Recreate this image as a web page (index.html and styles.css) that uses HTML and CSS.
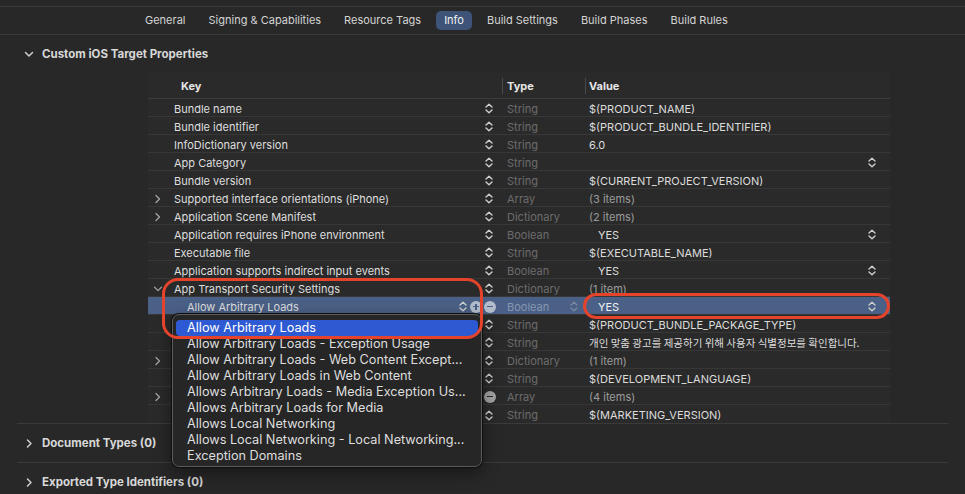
FILE: index.html
```html
<!DOCTYPE html>
<html>
<head>
<meta charset="utf-8">
<link rel="stylesheet" href="styles.css">
</head>
<body>
<div class="page">
  <nav class="tabbar">
    <span class="tab">General</span>
    <span class="tab">Signing &amp; Capabilities</span>
    <span class="tab">Resource Tags</span>
    <span class="tab active">Info</span>
    <span class="tab">Build Settings</span>
    <span class="tab">Build Phases</span>
    <span class="tab">Build Rules</span>
  </nav>

  <div class="section-head">
    <span class="chev"><svg width="10" height="7" viewBox="0 0 10 7"><path d="M1.5 1.5 L5 5 L8.5 1.5" fill="none" stroke="#cfcfcf" stroke-width="1.5" stroke-linecap="round" stroke-linejoin="round"/></svg></span>
    <span>Custom iOS Target Properties</span>
  </div>

  <div class="table">
    <div class="thead">
      <span></span>
      <span class="h-key">Key</span>
      <span></span>
      <span class="h-col">Type</span>
      <span class="h-col">Value</span>
    </div>

    <div class="row"><span class="disc"></span><span class="key">Bundle name</span><span class="ctrl"><i class="stp"></i></span><span class="type">String</span><span class="val">$(PRODUCT_NAME)</span></div>
    <div class="row"><span class="disc"></span><span class="key">Bundle identifier</span><span class="ctrl"><i class="stp"></i></span><span class="type">String</span><span class="val">$(PRODUCT_BUNDLE_IDENTIFIER)</span></div>
    <div class="row"><span class="disc"></span><span class="key">InfoDictionary version</span><span class="ctrl"><i class="stp"></i></span><span class="type">String</span><span class="val">6.0</span></div>
    <div class="row"><span class="disc"></span><span class="key">App Category</span><span class="ctrl"><i class="stp"></i></span><span class="type">String</span><span class="val pop"><span></span><i class="stp"></i></span></div>
    <div class="row"><span class="disc"></span><span class="key">Bundle version</span><span class="ctrl"><i class="stp"></i></span><span class="type">String</span><span class="val">$(CURRENT_PROJECT_VERSION)</span></div>
    <div class="row"><span class="disc"><i class="dr"></i></span><span class="key">Supported interface orientations (iPhone)</span><span class="ctrl"><i class="stp"></i></span><span class="type">Array</span><span class="val dim">(3 items)</span></div>
    <div class="row"><span class="disc"><i class="dr"></i></span><span class="key">Application Scene Manifest</span><span class="ctrl"><i class="stp"></i></span><span class="type">Dictionary</span><span class="val dim">(2 items)</span></div>
    <div class="row"><span class="disc"></span><span class="key">Application requires iPhone environment</span><span class="ctrl"><i class="stp"></i></span><span class="type">Boolean</span><span class="val pop"><span>YES</span><i class="stp"></i></span></div>
    <div class="row"><span class="disc"></span><span class="key">Executable file</span><span class="ctrl"><i class="stp"></i></span><span class="type">String</span><span class="val">$(EXECUTABLE_NAME)</span></div>
    <div class="row"><span class="disc"></span><span class="key">Application supports indirect input events</span><span class="ctrl"><i class="stp"></i></span><span class="type">Boolean</span><span class="val pop"><span>YES</span><i class="stp"></i></span></div>
    <div class="row"><span class="disc"><i class="dd"></i></span><span class="key">App Transport Security Settings</span><span class="ctrl"><i class="stp"></i></span><span class="type">Dictionary</span><span class="val dim">(1 item)</span></div>
    <div class="row selected"><span class="disc"></span><span class="key sub">Allow Arbitrary Loads</span><span class="ctrl wide"><i class="stp"></i><i class="circ plus"></i><i class="circ minus"></i></span><span class="type tstp">Boolean<i class="stp faint"></i></span><span class="val pop"><span>YES</span><i class="stp"></i></span></div>
    <div class="row"><span class="disc"></span><span class="key"></span><span class="ctrl"><i class="stp"></i></span><span class="type">String</span><span class="val">$(PRODUCT_BUNDLE_PACKAGE_TYPE)</span></div>
    <div class="row"><span class="disc"></span><span class="key"></span><span class="ctrl"><i class="stp"></i></span><span class="type">String</span><span class="val kr">개인 맞춤 광고를 제공하기 위해 사용자 식별정보를 확인합니다.</span></div>
    <div class="row"><span class="disc"><i class="dr"></i></span><span class="key"></span><span class="ctrl"><i class="stp"></i></span><span class="type">Dictionary</span><span class="val dim">(1 item)</span></div>
    <div class="row"><span class="disc"></span><span class="key"></span><span class="ctrl"><i class="stp"></i></span><span class="type">String</span><span class="val">$(DEVELOPMENT_LANGUAGE)</span></div>
    <div class="row"><span class="disc"><i class="dr"></i></span><span class="key"></span><span class="ctrl"><i class="circ minus solo"></i></span><span class="type">Array</span><span class="val dim">(4 items)</span></div>
    <div class="row last"><span class="disc"></span><span class="key"></span><span class="ctrl"><i class="stp"></i></span><span class="type">String</span><span class="val">$(MARKETING_VERSION)</span></div>
  </div>

  <div class="sections">
    <div class="srow"><span class="chev"><svg width="10" height="9" viewBox="0 0 10 9"><path d="M3.5 1 L7 4.5 L3.5 8" fill="none" stroke="#cfcfcf" stroke-width="1.5" stroke-linecap="round" stroke-linejoin="round"/></svg></span><span>Document Types (0)</span></div>
    <div class="srow"><span class="chev"><svg width="10" height="9" viewBox="0 0 10 9"><path d="M3.5 1 L7 4.5 L3.5 8" fill="none" stroke="#cfcfcf" stroke-width="1.5" stroke-linecap="round" stroke-linejoin="round"/></svg></span><span>Exported Type Identifiers (0)</span></div>
  </div>

  <ul class="menu">
    <li class="hl">Allow Arbitrary Loads</li>
    <li>Allow Arbitrary Loads - Exception Usage</li>
    <li>Allow Arbitrary Loads - Web Content Except...</li>
    <li>Allow Arbitrary Loads in Web Content</li>
    <li>Allows Arbitrary Loads - Media Exception Us...</li>
    <li>Allows Arbitrary Loads for Media</li>
    <li>Allows Local Networking</li>
    <li>Allows Local Networking - Local Networking...</li>
    <li>Exception Domains</li>
  </ul>

  <div class="mark mark-key"></div>
  <div class="mark mark-val"></div>
</div>
</body>
</html>
```

FILE: styles.css
```css
* { box-sizing: border-box; }
html, body { margin: 0; padding: 0; }
body {
  background: #282828;
  color: #dcdcdc;
  font-family: "Inter", "Liberation Sans", sans-serif;
  font-size: 11px;
  padding-top: 6px;
}
.page { position: relative; height: 488px; overflow: hidden; }

.tabbar {
  display: flex;
  align-items: center;
  gap: 7px;
  height: 29px;
  padding-left: 137px;
  border-top: 1px solid #3a3a3a;
  border-bottom: 1px solid #3a3a3a;
}
.tab {
  height: 19px;
  line-height: 19px;
  padding: 0 8px;
  border-radius: 5px;
  color: #d4d4d4;
}
.tab.active { background: #3e5378; color: #f2f2f2; }

.section-head {
  height: 38px;
  display: flex;
  align-items: center;
  padding-left: 24px;
  font-weight: 700;
  font-size: 11.5px;
  color: #d8d8d8;
}
.chev { width: 10px; margin-right: 8px; display: flex; align-items: center; justify-content: center; }

.table {
  margin-left: 148px;
  width: 742px;
  background: #2a2a2a;
}
.thead, .row {
  display: grid;
  grid-template-columns: 26px 280px 48px 83px 1fr;
  align-items: center;
}
.thead {
  height: 26px;
  border-bottom: 1px solid #3c3c3c;
  font-weight: 700;
  color: #e6e6e6;
}
.h-key { padding-left: 7px; }
.h-col { border-left: 1px solid #4a4a4a; padding-left: 4px; height: 16px; line-height: 16px; }
.h-col:last-child { padding-left: 3px; }

.row {
  height: 18px;
  padding-top: 2px;
  border-bottom: 1px solid #373737;
  white-space: nowrap;
}
.row.last { border-bottom: none; }
.row.selected { background: #4a6086; }
.disc { height: 15px; display: flex; align-items: center; padding-left: 5px; }
.key { overflow: hidden; color: #dedede; }
.key.sub { padding-left: 13px; }
.ctrl { display: flex; align-items: center; justify-content: flex-end; padding-right: 9px; height: 15px; gap: 2px; }
.ctrl.wide { margin-left: -30px; padding-right: 6px; }
.ctrl.wide .stp { margin-right: 1px; }
.type { color: #6c6c6c; padding-left: 5px; }
.row.selected .type { color: #8797b2; }
.tstp { display: flex; align-items: center; justify-content: space-between; padding-right: 7px; height: 15px; }
.val { padding-left: 4px; color: #dcdcdc; }
.val.dim { color: #9c9c9c; }
.val.kr { font-family: "Noto Sans CJK KR", "Inter", sans-serif; font-size: 10.5px; }
.val.pop { display: flex; align-items: center; justify-content: space-between; padding-left: 13px; padding-right: 14px; height: 15px; }
.row.selected .val { color: #f2f2f2; }

.stp {
  display: block;
  width: 8px;
  height: 11px;
  background: url("data:image/svg+xml;utf8,<svg xmlns='http://www.w3.org/2000/svg' width='8' height='11' viewBox='0 0 8 11'><path d='M1 4 L4 1.2 L7 4 M1 7 L4 9.8 L7 7' fill='none' stroke='%23cfcfcf' stroke-width='1.4' stroke-linecap='round' stroke-linejoin='round'/></svg>") no-repeat center;
}
.stp.faint { opacity: 0.35; }
.circ {
  display: block;
  width: 12px;
  height: 12px;
  border-radius: 50%;
  background: #b3bccb;
  position: relative;
}
.row:not(.selected) .circ { background: #a3a3a3; }
.circ::before, .circ.plus::after {
  content: "";
  position: absolute;
  left: 3px; top: 5.25px;
  width: 6px; height: 1.5px;
  background: #4a6086;
}
.row:not(.selected) .circ::before { background: #2a2a2a; }
.circ.plus::after { left: 5.25px; top: 3px; width: 1.5px; height: 6px; }
.circ.solo { margin-right: -3px; }

.dr, .dd { display: block; width: 10px; height: 10px; }
.dr {
  background: url("data:image/svg+xml;utf8,<svg xmlns='http://www.w3.org/2000/svg' width='10' height='10' viewBox='0 0 10 10'><path d='M3 1.5 L6.5 5 L3 8.5' fill='none' stroke='%23a8a8a8' stroke-width='1.2' stroke-linecap='round' stroke-linejoin='round'/></svg>") no-repeat center;
}
.dd {
  background: url("data:image/svg+xml;utf8,<svg xmlns='http://www.w3.org/2000/svg' width='10' height='10' viewBox='0 0 10 10'><path d='M1.5 3.2 L5 6.7 L8.5 3.2' fill='none' stroke='%23a8a8a8' stroke-width='1.2' stroke-linecap='round' stroke-linejoin='round'/></svg>") no-repeat center;
}

.sections { margin: 0 17px; }
.srow {
  height: 39px;
  border-top: 1px solid #3a3a3a;
  display: flex;
  align-items: center;
  padding-left: 7px;
  font-weight: 700;
  font-size: 11.5px;
  color: #d8d8d8;
}

.menu {
  position: absolute;
  left: 172px;
  top: 308px;
  width: 310px;
  height: 153px;
  margin: 0;
  padding: 5px 3px 3px;
  list-style: none;
  background: #262626;
  border: 1px solid #5c5c5c;
  border-radius: 7px;
  box-shadow: 0 0 0 1px #0e0e0e, 0 6px 18px rgba(0,0,0,0.45);
  font-size: 12.7px;
  color: #dedede;
}
.menu li {
  height: 16px;
  line-height: 16px;
  padding-left: 11px;
  border-radius: 4px;
  white-space: nowrap;
}
.menu li.hl { background: #2d5ad2; color: #fff; }

.mark {
  position: absolute;
  border: 3px solid #e4432c;
  pointer-events: none;
}
.mark-key { left: 162px; top: 272px; width: 321px; height: 61px; border-radius: 16px; }
.mark-val { left: 583px; top: 287px; width: 307px; height: 26px; border-radius: 13px; }
```
